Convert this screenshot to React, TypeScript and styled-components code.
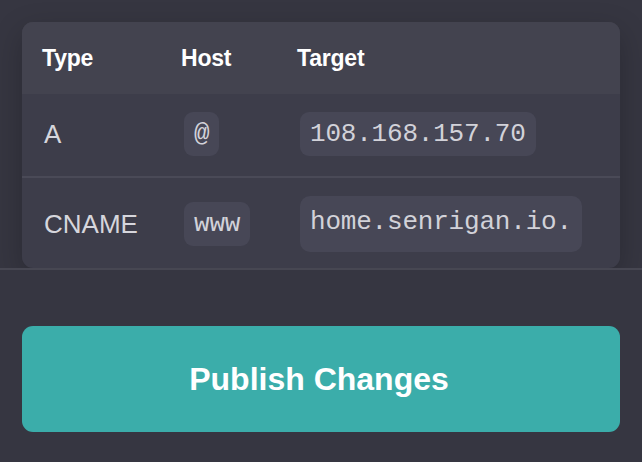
import React from "react";
import styled, { createGlobalStyle } from "styled-components";

const Global = createGlobalStyle`
  html, body { margin: 0; padding: 0; background: #363641; }
  * { box-sizing: border-box; }
`;

const Page = styled.div`
  width: 642px;
  height: 462px;
  display: flex;
  flex-direction: column;
  background: #363641;
  font-family: "Liberation Sans", Arial, sans-serif;
  overflow: hidden;
`;

const ScrollArea = styled.div`
  flex: 1;
  min-height: 0;
  overflow: hidden;
  padding: 22px 22px 0;
`;

const Card = styled.div`
  border-radius: 11px;
  background: #3d3d4a;
  box-shadow: 0 10px 30px rgba(0, 0, 0, 0.22);
  overflow: hidden;
`;

const Grid = styled.div<{ $head?: boolean }>`
  display: grid;
  grid-template-columns: ${(p) => (p.$head ? "139px 116px 1fr" : "140px 116px 1fr")};
  align-items: center;
`;

const HeadRow = styled(Grid)`
  height: 72px;
  padding: 0 20px;
  background: #43434f;
`;

const HeadCell = styled.div`
  color: #ffffff;
  font-weight: 700;
  font-size: 23px;
  letter-spacing: -0.2px;
`;

const Row = styled(Grid)`
  padding: 18px 22px 20px;
  border-bottom: 2px solid #4a4a57;
  &:last-child {
    border-bottom: none;
    padding-bottom: 16px;
  }
`;

const TypeCell = styled.div`
  color: #d6d6dc;
  font-size: 26px;
`;

const Cell = styled.div`
  display: flex;
  align-items: center;
`;

const Pill = styled.span<{ $tall?: boolean }>`
  display: inline-flex;
  align-items: center;
  height: ${(p) => (p.$tall ? "56px" : "44px")};
  padding: 0 10px ${(p) => (p.$tall ? "4px" : "0")};
  border-radius: ${(p) => (p.$tall ? "10px" : "9px")};
  background: #474756;
  color: #d2d2d9;
  font-family: "Liberation Mono", "Courier New", monospace;
  font-size: 26px;
  letter-spacing: -0.2px;
  white-space: nowrap;
`;

const Footer = styled.div`
  border-top: 2px solid #474752;
  padding: 56px 22px 30px;
`;

const PublishButton = styled.button`
  width: 100%;
  height: 106px;
  border: none;
  border-radius: 11px;
  background: #3badaa;
  color: #ffffff;
  font-family: "Liberation Sans", Arial, sans-serif;
  font-weight: 700;
  font-size: 32px;
  padding: 0 4px 0 0;
  cursor: pointer;
`;

const records = [
  { type: "A", host: "@", target: "108.168.157.70", tall: false },
  { type: "CNAME", host: "www", target: "home.senrigan.io.", tall: true },
];

export default function App() {
  return (
    <Page>
      <Global />
      <ScrollArea>
        <Card>
          <HeadRow $head>
            <HeadCell>Type</HeadCell>
            <HeadCell>Host</HeadCell>
            <HeadCell>Target</HeadCell>
          </HeadRow>
          {records.map((r) => (
            <Row key={r.type}>
              <TypeCell>{r.type}</TypeCell>
              <Cell>
                <Pill>{r.host}</Pill>
              </Cell>
              <Cell>
                <Pill $tall={r.tall}>{r.target}</Pill>
              </Cell>
            </Row>
          ))}
        </Card>
      </ScrollArea>
      <Footer>
        <PublishButton>Publish Changes</PublishButton>
      </Footer>
    </Page>
  );
}
